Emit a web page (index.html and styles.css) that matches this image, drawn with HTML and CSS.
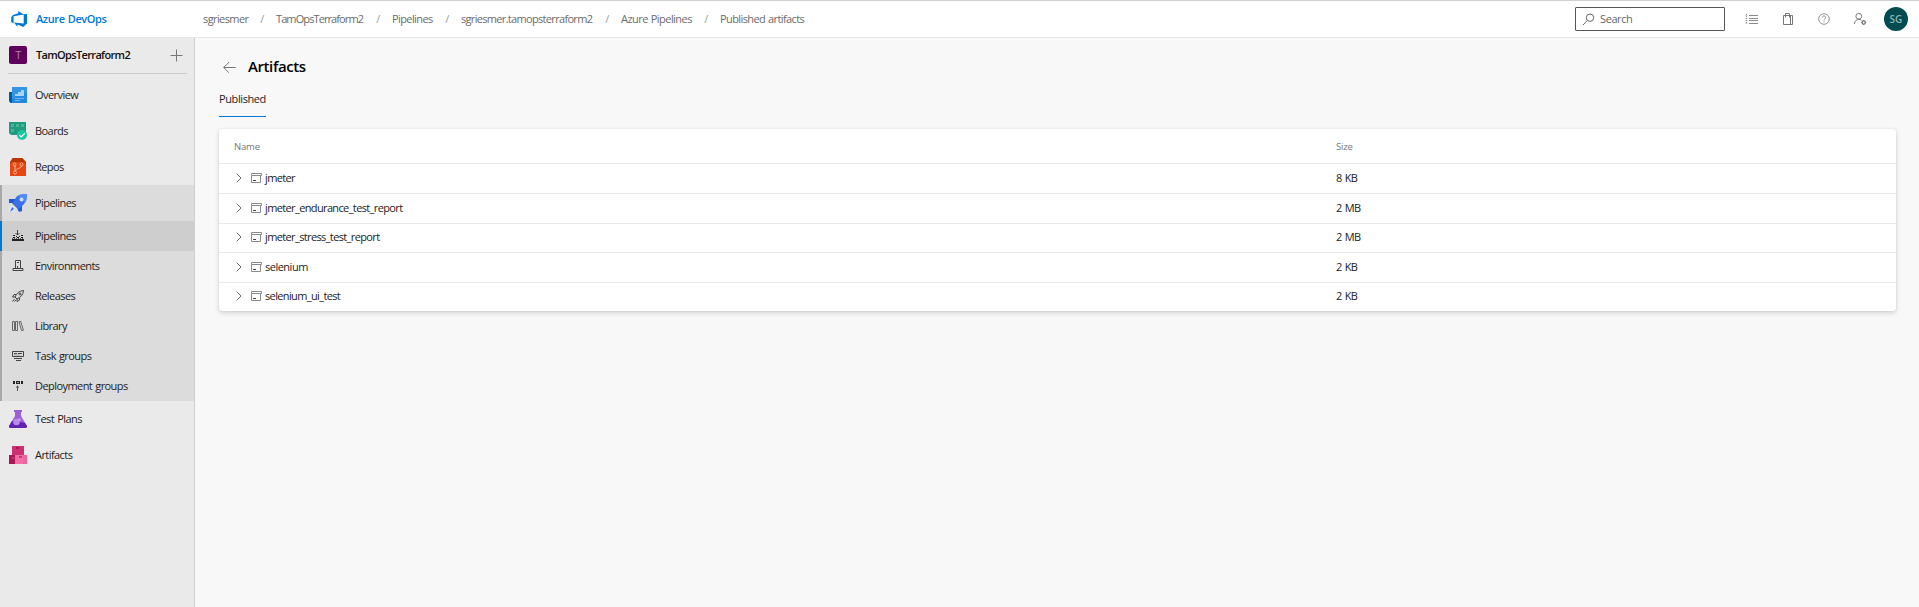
FILE: index.html
```html
<!DOCTYPE html>
<html lang="en">
<head>
<meta charset="utf-8">
<title>Artifacts - Azure DevOps</title>
<link rel="stylesheet" href="styles.css">
</head>
<body>
<header class="topbar">
  <a class="brand">
    <svg width="18" height="18" viewBox="0 0 18 18"><path fill="#0078d7" d="M17 4v9.600L13.300 17 7.500 14.600v2.300L4 12.400l9.700 1V4.300zM13.800 4.400 8.200 1v2.200L3 4.900 1.200 7.200v5.100l2.400 1V6.200z"/></svg>
    <span>Azure DevOps</span>
  </a>
  <nav class="crumbs">
    <span class="c1">sgriesmer</span><i>/</i><span class="c2">TamOpsTerraform2</span><i>/</i><span class="c3">Pipelines</span><i>/</i><span class="c4">sgriesmer.tamopsterraform2</span><i>/</i><span class="c5">Azure Pipelines</span><i>/</i><span class="c6">Published artifacts</span>
  </nav>
  <div class="search">
    <svg width="13" height="13" viewBox="0 0 13 13" fill="none" stroke="#666"><circle cx="8" cy="4.700" r="3.700"/><path d="M5.300 7.500 1 12"/></svg>
    <span>Search</span>
  </div>
  <div class="tools">
    <svg width="14" height="14" viewBox="0 0 14 14" fill="none" stroke="#8c8c8c"><path d="M4 3.500h9M4 6.500h9M4 8.500h9M4 11.500h9"/><path stroke-dasharray="1 1" d="M1.500 2v10"/><path d="M.5 3.500h2M.5 6.500h2M.5 8.500h2M.5 11.500h2" opacity=".5"/></svg>
    <svg width="14" height="14" viewBox="0 0 14 14" fill="none" stroke="#777"><path d="M2.500 3.500h9v9h-9zM9.500 3.500v9M4.500 5.500V1.500h4v4"/></svg>
    <svg width="14" height="14" viewBox="0 0 14 14" fill="none" stroke="#858585" stroke-width=".9"><circle cx="7" cy="7" r="5.300"/><path d="M5.300 5.700c0-2.400 3.600-2.200 3.400 0-.1 1.100-1.700 1.200-1.700 2.500M7 9.300v1"/></svg>
    <svg width="14" height="14" viewBox="0 0 14 14" fill="none" stroke="#777" stroke-width=".95"><circle cx="5.800" cy="4.200" r="2.900"/><path d="M1.300 12c.3-3 2.200-4.600 4.500-4.600 1.200 0 2.100.4 2.800 1"/><circle cx="10.700" cy="10.500" r="1.600" stroke-width="1.300"/><path stroke-width="1" d="M10.700 8v1M10.700 12v1M8.200 10.500h1M12.200 10.500h1"/></svg>
  </div>
  <div class="avatar">SG</div>
</header>
<div class="shell">
  <aside class="sidebar">
    <div class="project">
      <span class="tile">T</span><b>TamOpsTerraform2</b>
      <svg width="13" height="13" viewBox="0 0 13 13" stroke="#777" fill="none"><path d="M6.500 .5v12M.5 6.500h12"/></svg>
    </div>
    <a class="hub"><svg width="18" height="18" viewBox="0 0 18 18"><path fill="#005ba1" d="M0 6h4v11H1.500L0 15z"/><path fill="#2488de" d="M3 1h15v16H3z"/><path fill="#43a2ee" d="M3 1h15v5L3 13z" opacity=".5"/><path fill="#a5d4ff" d="M6 8h3v2H6zM9 6h3v4H9zM12 4h3v6h-3z"/><path fill="#71b6f4" d="M6 12h9v1H6zM6 14h5v1H6z"/></svg><span>Overview</span></a>
    <a class="hub"><svg width="18" height="18" viewBox="0 0 18 18"><path d="M0 0h17v13H2l-2-2z" fill="#209b7d"/><path fill="#65c6a9" d="M2 2h3v3H2zM7 2h3v3H7zM12 2h3v3h-3zM2 7h3v3H2z" opacity=".6"/><circle cx="13" cy="13" r="5" fill="#1bc6a0"/><path d="m10.300 13 2 2 3.500-3.700" fill="none" stroke="#fff" stroke-width="1.200"/></svg><span>Boards</span></a>
    <a class="hub"><svg width="18" height="18" viewBox="0 0 18 18"><path fill="#bd3500" d="M3.500 0h10L17 4v14H1V4z"/><path fill="#e44713" d="M1 6 3 4h12l2 2v12H1z"/><g fill="none" stroke="#ffb294"><circle cx="5.500" cy="6.500" r="1.500"/><circle cx="12.500" cy="6.500" r="1.500"/><circle cx="6" cy="14.500" r="1.500"/><path d="M6 8v5M12.500 8c0 3-6 2-6 5"/></g></svg><span>Repos</span></a>
    <div class="group">
      <a class="hub"><svg width="18" height="18" viewBox="0 0 18 18"><path fill="#2458cf" d="M0 5h7l6 6v6l-3 1-2-4-5-5H0z"/><path fill="#3972e8" d="M6 5c2-4 5-5 12-5 0 6-1 8-4 11l-4 4-6-6z"/><path fill="#6596f6" d="M9 2c3-2 6-2 9-2 0 3 0 6-2 9z" opacity=".6"/><circle cx="12.500" cy="5.500" r="2" fill="#c8dcff"/><path fill="#dbe9ff" d="M0 12h3l3 3v3H0z"/><path fill="#3b6fe0" d="m1 18 2-5 2 2z"/></svg><span>Pipelines</span></a>
      <a class="sub on"><svg width="12" height="12" viewBox="0 0 12 12"><path stroke="#444" fill="none" d="M5.500 0v5M3.500 3l2 2 2-2"/><path fill="#222" d="M1 5h2v1H1zM9 5h2v1H9zM4 6h1v1H4zM7 6h1v1H7zM1 7h2v1H1zM9 7h2v1H9zM5 7h2v1H5zM0 9h12v2H0z"/><path stroke="#555" stroke-dasharray="1 1" d="M0 8.500h12"/></svg><span>Pipelines</span></a>
      <a class="sub"><svg width="12" height="12" viewBox="0 0 12 12" fill="none" stroke="#444"><path d="M3.500 8V.5h5V8M1 8.500h10v2H1zM5 2.500h2M5.500 6v2"/></svg><span>Environments</span></a>
      <a class="sub"><svg width="12" height="12" viewBox="0 0 12 12" fill="none" stroke="#444"><path d="M3 7C5 3 7 1 11.500.5 11 5 9 7 5 9zM4 4.500H2L.5 7h2.700M7.500 8v2L5 11.500V9M2.500 9l-2 2.500M4 10l-1.500 1.500"/><circle cx="8" cy="4" r="1"/></svg><span>Releases</span></a>
      <a class="sub"><svg width="12" height="12" viewBox="0 0 12 12" fill="none" stroke="#666"><path d="M.5 1.500h2v9h-2zM3.500 1.500h2v9h-2zM7 1.800l1.700-.4 2.700 8.800-1.800.5zM5.500 1v9.500"/></svg><span>Library</span></a>
      <a class="sub"><svg width="12" height="12" viewBox="0 0 12 12" fill="none" stroke="#444"><path d="M.5 1.500h11v5H.5zM2 3.500h3M6 3.500h4M2 8.500h8M4 10.500h5"/><path d="M2 5h6" opacity=".4"/></svg><span>Task groups</span></a>
      <a class="sub"><svg width="12" height="12" viewBox="0 0 12 12"><path fill="#222" d="M1 1h2v3H1zM9 1h2v3H9zM4 1h4v3H4z"/><path fill="#aaa" d="M5 2h2v1H5z"/><path stroke="#555" fill="none" d="M5.500 5.500V11M4 7.500l1.500-1 1.500 1"/></svg><span>Deployment groups</span></a>
    </div>
    <a class="hub"><svg width="18" height="18" viewBox="0 0 18 18"><path fill="#9b61d3" d="M5 0h8v2h-1v4l6 10v1l-1 1H1l-1-1v-1L6 6V2H5z"/><path fill="#6222b4" d="m3 11 9 1 4 1 2 3v1l-1 1H1l-1-1v-1z"/><circle cx="7.500" cy="12" r="3.300" fill="#b98ae8"/><circle cx="10.500" cy="9.500" r="1.300" fill="#c8a1ee"/></svg><span>Test Plans</span></a>
    <a class="hub"><svg width="18" height="18" viewBox="0 0 18 18"><path fill="#ce3073" d="M3 0h12v9H3z"/><path fill="#a91850" d="M0 9h8v9H0zM7 1h3v2H7z"/><path fill="#ef70a5" d="M6 9h12v9H6z"/><path fill="#c93679" d="M10 10h3v2h-3zM3 11h2v2H3z"/><path fill="#e84c8c" d="M14 9h4v9h-4z" opacity=".3"/></svg><span>Artifacts</span></a>
  </aside>
  <main class="content">
    <div class="heading">
      <svg width="13" height="12" viewBox="0 0 13 12" fill="none" stroke="#777"><path d="M.7 6.500h12M6.200 1 .7 6.500l5.200 5.200"/></svg>
      <h1>Artifacts</h1>
    </div>
    <div class="tabs"><span>Published</span></div>
    <section class="card">
      <div class="row head"><span>Name</span><span>Size</span></div>
      <div class="row"><div class="name"><svg class="chev" width="6" height="10" viewBox="0 0 6 10"><path d="m.7.7 4.300 4.300L.7 9.300"/></svg><svg class="box" width="12" height="12" viewBox="0 0 12 12"><path d="M.5 1.500h10v2H.5zM.5 3.500v7h9v-7"/><path class="dark" d="M2 8.500h3"/></svg><span>jmeter</span></div><span>8 KB</span></div>
      <div class="row"><div class="name"><svg class="chev" width="6" height="10" viewBox="0 0 6 10"><path d="m.7.7 4.300 4.300L.7 9.300"/></svg><svg class="box" width="12" height="12" viewBox="0 0 12 12"><path d="M.5 1.500h10v2H.5zM.5 3.500v7h9v-7"/><path class="dark" d="M2 8.500h3"/></svg><span>jmeter_endurance_test_report</span></div><span>2 MB</span></div>
      <div class="row short"><div class="name"><svg class="chev" width="6" height="10" viewBox="0 0 6 10"><path d="m.7.7 4.300 4.300L.7 9.300"/></svg><svg class="box" width="12" height="12" viewBox="0 0 12 12"><path d="M.5 1.500h10v2H.5zM.5 3.500v7h9v-7"/><path class="dark" d="M2 8.500h3"/></svg><span>jmeter_stress_test_report</span></div><span>2 MB</span></div>
      <div class="row"><div class="name"><svg class="chev" width="6" height="10" viewBox="0 0 6 10"><path d="m.7.7 4.300 4.300L.7 9.300"/></svg><svg class="box" width="12" height="12" viewBox="0 0 12 12"><path d="M.5 1.500h10v2H.5zM.5 3.500v7h9v-7"/><path class="dark" d="M2 8.500h3"/></svg><span class="wide">selenium</span></div><span>2 KB</span></div>
      <div class="row last"><div class="name"><svg class="chev" width="6" height="10" viewBox="0 0 6 10"><path d="m.7.7 4.300 4.300L.7 9.300"/></svg><svg class="box" width="12" height="12" viewBox="0 0 12 12"><path d="M.5 1.500h10v2H.5zM.5 3.500v7h9v-7"/><path class="dark" d="M2 8.500h3"/></svg><span>selenium_ui_test</span></div><span>2 KB</span></div>
    </section>
  </main>
</div>
</body>
</html>
```
FILE: styles.css
```css
* { box-sizing: border-box; }
body {
  margin: 0;
  height: 607px;
  display: flex;
  flex-direction: column;
  overflow: hidden;
  background: #f8f8f8;
  color: #1c1c1c;
  font: 11px/16px "Open Sans", "Noto Sans", sans-serif;
  letter-spacing: -0.6px;
  word-spacing: 0.7px;
}
svg { display: block; flex: none; }
span, b { white-space: nowrap; }

.topbar {
  display: flex;
  align-items: center;
  flex: none;
  height: 38px;
  padding-right: 11px;
  background: #fff;
  border-top: 1px solid #d0d0d0;
  border-bottom: 1px solid #e6e6e6;
}
.brand {
  display: flex;
  align-items: center;
  gap: 8px;
  width: 203px;
  padding-left: 10px;
  color: #0078d4;
  font-weight: 600;
  letter-spacing: -0.4px;
}
.crumbs { display: flex; color: #6b6b6b; }
.crumbs i { width: 28px; text-align: center; font-style: normal; color: #9a9a9a; }
.c1 { width: 45px; }
.c2 { width: 88px; letter-spacing: -0.9px; }
.c3 { width: 41px; }
.c4 { width: 132px; letter-spacing: -0.68px; }
.c5 { width: 71px; letter-spacing: -0.55px; }
.c6 { width: 85px; }
.search {
  display: flex;
  align-items: center;
  gap: 5px;
  width: 150px;
  height: 24px;
  margin-left: auto;
  padding-left: 6px;
  border: 1px solid #555;
  border-radius: 1px;
  color: #666;
  letter-spacing: -0.4px;
}
.tools { display: flex; gap: 22px; margin: 0 17px 0 20px; }
.avatar {
  width: 24px;
  height: 24px;
  border-radius: 50%;
  background: #004b50;
  color: #8fb5b7;
  font-size: 10px;
  font-weight: 600;
  line-height: 24px;
  text-align: center;
  letter-spacing: 0;
}

.shell { display: flex; flex: 1; min-height: 0; }
.sidebar {
  flex: none;
  width: 195px;
  background: #eaeaea;
  border-right: 1px solid #cfcfcf;
}
.project {
  display: flex;
  align-items: center;
  height: 36px;
  margin: 0 7px 3px 8px;
  padding: 0 4px 1px 1px;
  border-bottom: 1px solid #cbcbcb;
}
.project b { flex: 1; margin-left: 9px; font-weight: 600; color: #111; letter-spacing: -0.66px; }
.tile {
  width: 18px;
  height: 18px;
  border-radius: 2px;
  background: #5c005c;
  color: #b987b9;
  line-height: 18px;
  text-align: center;
}
.hub { display: flex; align-items: center; gap: 8px; height: 36px; padding-left: 9px; }
.group { background: #dcdcdc; box-shadow: inset 2px 0 #a9a9a9; }
.sub { display: flex; align-items: center; gap: 11px; height: 30px; padding-left: 12px; }
.hub span, .sub span { letter-spacing: -0.56px; }
.on { background: #cecece; box-shadow: inset 2px 0 #0078d4; }

.content { flex: 1; padding: 0 23px 0 24px; }
.heading { display: flex; align-items: center; gap: 12px; height: 53px; padding: 5px 0 0 4px; }
.heading h1 { margin: 0; padding-bottom: 2px; color: #000; font-size: 15px; line-height: 20px; font-weight: 600; letter-spacing: -0.4px; }
.tabs { display: flex; height: 38px; }
.tabs span { width: 47px; height: 26px; border-bottom: 1px solid #0078d4; letter-spacing: -0.4px; }
.card {
  background: #fff;
  border-radius: 3px;
  box-shadow: 0 2px 5px rgba(0, 0, 0, .15), 0 0 2px rgba(0, 0, 0, .1);
}
.row {
  display: grid;
  grid-template-columns: 1101px 1fr;
  align-items: center;
  height: 30px;
  padding: 0 0 1px 16px;
  border-bottom: 1px solid #e9e9e9;
}
.head { height: 35px; padding: 2px 0 1px 15px; grid-template-columns: 1102px 1fr; color: #777; font-size: 9.500px; letter-spacing: -0.2px; }
.short { height: 29px; padding-bottom: 2px; }
.last { height: 28px; padding-bottom: 2px; border-bottom: 0; }
.name { display: flex; align-items: center; letter-spacing: -0.63px; }
.wide { letter-spacing: -0.5px; }
.chev { margin: 0 9px 0 1px; fill: none; stroke: #666; }
.box { margin-right: 2px; fill: none; stroke: #8a8a8a; }
.dark { stroke: #444; }
```
